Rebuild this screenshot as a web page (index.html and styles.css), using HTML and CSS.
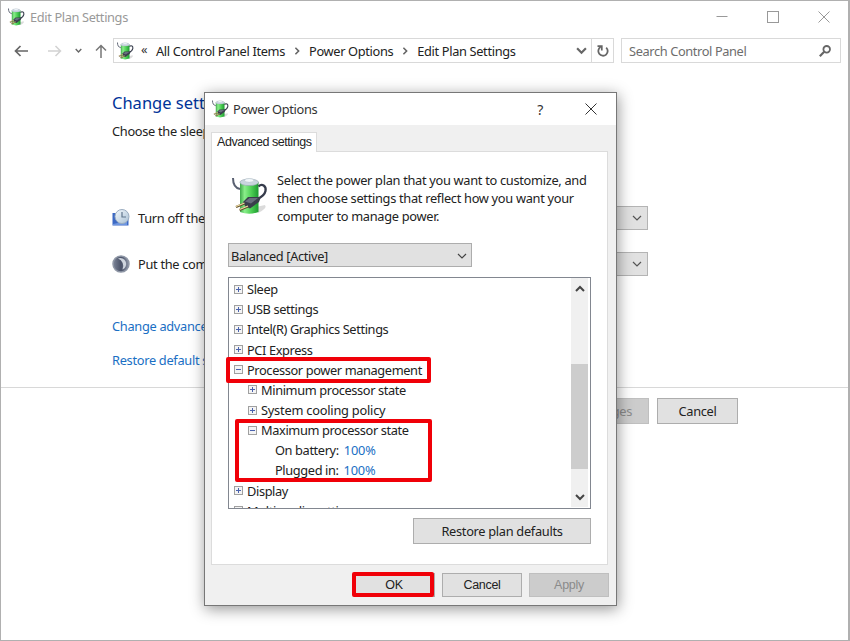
FILE: index.html
```
<!DOCTYPE html>
<html>
    <head>
        <meta charset="utf-8">
        <title>Edit Plan Settings</title>
        <link rel="stylesheet" href="styles.css">
    </head>

    <body>

        <!-- shared icons -->
        <svg class="icon_defs" width="0" height="0">
            <defs>
                <linearGradient id="green_fill" x1="0" x2="1" y1="0" y2="0">
                    <stop offset="0" stop-color="#3fa84a"/>
                    <stop offset="0.25" stop-color="#8aee8a"/>
                    <stop offset="0.6" stop-color="#4fd056"/>
                    <stop offset="1" stop-color="#1c9a30"/>
                </linearGradient>
                <linearGradient id="clock_fill" x1="0" x2="1" y1="0" y2="1">
                    <stop offset="0" stop-color="#f4f9fd"/>
                    <stop offset="1" stop-color="#a9c0d4"/>
                </linearGradient>
                <linearGradient id="moon_fill" x1="0" x2="1" y1="0" y2="0">
                    <stop offset="0" stop-color="#7d8598"/>
                    <stop offset="0.5" stop-color="#4a5268"/>
                    <stop offset="1" stop-color="#8b93a5"/>
                </linearGradient>
                <symbol id="battery" viewBox="0 0 36 38">
                    <path d="M24 30 L33 28 Q36 31 26 36 Z" fill="#000" opacity="0.14"/>
                    <path d="M8 5 V35 Q17 38.500 26.500 35 V5 Z" fill="url(#green_fill)"/>
                    <ellipse cx="17.200" cy="5.300" rx="9.300" ry="3.300" fill="#c9d5de" stroke="#94a3af" stroke-width="0.600"/>
                    <ellipse cx="17.200" cy="3.400" rx="4.500" ry="1.900" fill="#f2f7fa" stroke="#a9b6c1" stroke-width="0.500"/>
                    <path d="M1 1 C1 7 3 11 8 12" fill="none" stroke="#596071" stroke-width="2"/>
                    <path d="M26.500 9.500 C30 6 34.500 9 33.500 14 C32.500 18.500 29 20.500 25 22" fill="none" stroke="#363c4c" stroke-width="2.300"/>
                    <path d="M11 25 L16 20 L29 20 L27 25 L18 31.500 L13 29 Z" fill="#3a3e4c"/>
                    <path d="M13 24.500 L17.500 21 L26 21 L19 26.500 Z" fill="#686e7d"/>
                    <path d="M12.500 26.500 L4 30 M16 29.500 L7.500 33" stroke="#5e4e28" stroke-width="2.400"/>
                    <path d="M12.500 26 L4 29.500 M16 29 L7.500 32.500" stroke="#f0dba4" stroke-width="1.300"/>
                </symbol>
                <symbol id="chevron" viewBox="0 0 10 10">
                    <path d="M1 3 L5 7 L9 3" fill="none" stroke="currentColor" stroke-width="1.200"/>
                </symbol>
                <symbol id="chevron_bold" viewBox="0 0 10 10">
                    <path d="M1 3 L5 7 L9 3" fill="none" stroke="currentColor" stroke-width="2"/>
                </symbol>
                <symbol id="cross" viewBox="0 0 12 12">
                    <path d="M0.500 0.500 L11.500 11.500 M11.500 0.500 L0.500 11.500" fill="none" stroke="currentColor" stroke-width="1"/>
                </symbol>
            </defs>
        </svg>

        <div class="window">

            <div class="titlebar">
                <svg class="app_icon"><use href="#battery"/></svg>
                <span class="title">Edit Plan Settings</span>
                <div class="window_buttons">
                    <svg width="12" height="12" viewBox="0 0 12 12"><path d="M0.500 5.500 H11.500" stroke="currentColor"/></svg>
                    <svg width="12" height="12" viewBox="0 0 12 12"><rect x="0.500" y="0.500" width="11" height="11" fill="none" stroke="currentColor"/></svg>
                    <svg width="12" height="12"><use href="#cross"/></svg>
                </div>
            </div>

            <div class="navbar">
                <div class="nav_arrows">
                    <svg width="14" height="12" viewBox="0 0 14 12"><path d="M14 6 H1.500 M6.500 1 L1.500 6 L6.500 11" fill="none" stroke="#666" stroke-width="1.700"/></svg>
                    <svg class="disabled_arrow" width="14" height="12" viewBox="0 0 14 12"><path d="M0 6 H12.500 M7.500 1 L12.500 6 L7.500 11" fill="none" stroke="#d2d2d2" stroke-width="1.500"/></svg>
                    <svg class="recent_arrow" width="7" height="7"><use href="#chevron_bold"/></svg>
                    <svg class="up_arrow" width="12" height="14" viewBox="0 0 12 14"><path d="M6 14 V1.500 M1 6.500 L6 1.500 L11 6.500" fill="none" stroke="#777" stroke-width="1.500"/></svg>
                </div>
                <div class="address">
                    <svg class="app_icon"><use href="#battery"/></svg>
                    <span class="crumb_more">«</span>
                    <span class="crumb">All Control Panel Items</span>
                    <svg class="crumb_arrow" width="8" height="8"><use href="#chevron_bold"/></svg>
                    <span class="crumb">Power Options</span>
                    <svg class="crumb_arrow" width="8" height="8"><use href="#chevron_bold"/></svg>
                    <span class="crumb">Edit Plan Settings</span>
                    <svg class="address_arrow" width="11" height="11"><use href="#chevron_bold"/></svg>
                </div>
                <div class="refresh">
                    <svg width="12" height="12" viewBox="0 0 12 12"><path d="M9.200 2.600 A4.700 4.700 0 1 1 3.600 2" fill="none" stroke="#666" stroke-width="1.800"/><path d="M0.500 1.200 H4.800 V5.500" fill="none" stroke="#666" stroke-width="1.700"/></svg>
                </div>
                <div class="search">
                    <span>Search Control Panel</span>
                    <svg width="12" height="12" viewBox="0 0 12 12"><circle cx="7.700" cy="4.300" r="3.300" fill="none" stroke="#666" stroke-width="1.800"/><path d="M5.200 6.800 L0.800 11.200" stroke="#666" stroke-width="2.200"/></svg>
                </div>
            </div>

            <div class="content">
                <h1>Change settings for the plan: Balanced</h1>
                <p class="intro">Choose the sleep and display settings that you want</p>

                <div class="setting">
                    <svg width="18" height="18" viewBox="0 0 18 18">
                        <path d="M0.500 4 H7 L16.500 9 V16.500 H0.500 Z" fill="#3c69c4"/>
                        <path d="M1 15 L15 12 V16 H1 Z" fill="#6e96e0"/>
                        <circle cx="10" cy="7.500" r="7" fill="url(#clock_fill)" stroke="#9aacc0"/>
                        <path d="M10 3 V8 H14" fill="none" stroke="#61768e" stroke-width="1.200"/>
                    </svg>
                    <span>Turn off the display:</span>
                    <div class="select"><svg width="10" height="10"><use href="#chevron"/></svg></div>
                </div>

                <div class="setting">
                    <svg width="18" height="18" viewBox="0 0 18 18">
                        <circle cx="9" cy="9" r="8" fill="url(#moon_fill)" stroke="#8f97a6" stroke-width="1.500"/>
                        <path d="M6 3.500 A5.800 5.800 0 1 1 10.500 14.500 A8 8 0 0 0 6 3.500 Z" fill="#cfd5de"/>
                    </svg>
                    <span>Put the computer to sleep:</span>
                    <div class="select"><svg width="10" height="10"><use href="#chevron"/></svg></div>
                </div>

                <a class="link link_advanced">Change advanced power settings</a>
                <a class="link">Restore default settings for this plan</a>
            </div>

            <div class="actions">
                <div class="button disabled save">Save changes</div>
                <div class="button cancel">Cancel</div>
            </div>

        </div>

        <div class="dialog">

            <div class="dialog_title">
                <svg class="app_icon"><use href="#battery"/></svg>
                <span class="title">Power Options</span>
                <span class="help">?</span>
                <svg width="12" height="12"><use href="#cross"/></svg>
            </div>

            <div class="tab">Advanced settings</div>

            <div class="panel">
                <div class="description">
                    <svg width="36" height="38"><use href="#battery"/></svg>
                    <p>Select the power plan that you want to customize, and<br>then choose settings that reflect how you want your<br>computer to manage power.</p>
                </div>

                <div class="plan_select">
                    <span>Balanced [Active]</span>
                    <svg width="10" height="10"><use href="#chevron"/></svg>
                </div>

                <div class="tree_box">
                    <div class="tree">
                        <div class="node"><i class="plus"></i><span>Sleep</span></div>
                        <div class="node"><i class="plus"></i><span>USB settings</span></div>
                        <div class="node"><i class="plus"></i><span>Intel(R) Graphics Settings</span></div>
                        <div class="node"><i class="plus"></i><span>PCI Express</span></div>
                        <div class="node"><i class="minus"></i><span>Processor power management</span></div>
                        <div class="node level2"><i class="plus"></i><span>Minimum processor state</span></div>
                        <div class="node level2"><i class="plus"></i><span class="wide">System cooling policy</span></div>
                        <div class="node level2"><i class="minus"></i><span>Maximum processor state</span></div>
                        <div class="node level3"><span>On battery:</span><span class="value">100%</span></div>
                        <div class="node level3"><span>Plugged in:</span><span class="value">100%</span></div>
                        <div class="node"><i class="plus"></i><span>Display</span></div>
                        <div class="node"><i class="plus"></i><span>Multimedia settings</span></div>
                    </div>
                    <div class="scrollbar">
                        <svg class="scroll_up" width="10" height="10"><use href="#chevron_bold"/></svg>
                        <div class="thumb"></div>
                        <svg width="10" height="10"><use href="#chevron_bold"/></svg>
                    </div>
                </div>

                <div class="button restore">Restore plan defaults</div>
            </div>

            <div class="dialog_buttons">
                <div class="button">OK</div>
                <div class="button">Cancel</div>
                <div class="button disabled">Apply</div>
            </div>

            <!-- red highlights over the dialog -->
            <div class="mark mark_processor"></div>
            <div class="mark mark_maximum"></div>
            <div class="mark mark_ok"></div>
        </div>

    </body>
</html>
```
FILE: styles.css
```
* {
    box-sizing: border-box;
}

body {
    margin: 0;
    width: 850px;
    height: 641px;
    overflow: hidden;
    position: relative;
    background-color: white;
    font-family: "Noto Sans", "Open Sans", sans-serif;
    font-size: 12.8px;
    letter-spacing: -0.3px;
    color: #222;
    white-space: nowrap;
}

h1, p {
    margin: 0;
    font-weight: normal;
}

svg {
    display: block;
    flex: none;
}

.icon_defs {
    position: absolute;
}

.window {
    width: 850px;
    height: 641px;
    border: 1px solid #b0b0b0;
    border-right-width: 2px;
}

.app_icon {
    width: 17px;
    height: 18px;
}

/* title bar */

.titlebar {
    display: flex;
    align-items: center;
    height: 31px;
    padding-left: 7px;
    color: #999;
}

.title {
    letter-spacing: -0.36px;
}

.titlebar .title {
    margin-left: 5px;
}

.window_buttons {
    display: flex;
    gap: 39px;
    margin-left: auto;
    padding-right: 18px;
}

/* navigation row */

.navbar {
    display: flex;
    height: 25px;
    margin-top: 6px;
    padding-left: 13px;
    color: #666;
}

.nav_arrows {
    display: flex;
    align-items: center;
    width: 99px;
}

.disabled_arrow {
    margin-left: 20px;
}

.recent_arrow {
    margin-left: 13px;
}

.up_arrow {
    margin-left: 13px;
}

.address {
    display: flex;
    align-items: center;
    width: 479px;
    border: 1px solid #d9d9d9;
    padding-left: 3px;
}

.crumb_more {
    width: 15px;
    margin-left: 7px;
    margin-top: -3px;
    color: #333;
}

.crumb {
    color: #222;
    letter-spacing: -0.34px;
}

.crumb_arrow {
    margin: 0 8px;
    transform: rotate(-90deg);
}

.address_arrow {
    margin-left: auto;
    margin-right: 4px;
}

.refresh {
    display: flex;
    align-items: center;
    justify-content: center;
    width: 22px;
    border: 1px solid #d9d9d9;
    border-left: none;
}

.search {
    display: flex;
    align-items: center;
    justify-content: space-between;
    width: 220px;
    margin-left: 7px;
    padding: 0 9px 0 7px;
    border: 1px solid #d9d9d9;
    color: #6d6d6d;
    letter-spacing: -0.38px;
}

/* page behind the dialog */

.content {
    height: 325px;
    padding: 28px 0 0 111px;
    border-bottom: 1px solid #d8d8d8;
}

h1 {
    font-size: 16.5px;
    line-height: 24px;
    letter-spacing: 0;
    color: #003399;
}

.intro {
    margin-top: 6px;
    line-height: 20px;
}

.setting {
    display: flex;
    align-items: center;
    width: 536px;
    height: 24px;
    margin-top: 22px;
}

.intro + .setting {
    margin-top: 65px;
}

.setting span {
    margin-left: 8px;
}

.select {
    display: flex;
    align-items: center;
    justify-content: flex-end;
    width: 180px;
    height: 24px;
    margin-left: auto;
    padding-right: 5px;
    border: 1px solid #b4b4b4;
    background-color: #e1e1e1;
    color: #555;
}

.link {
    display: block;
    line-height: 20px;
    margin-top: 14px;
    color: #1a6fc4;
}

.link_advanced {
    margin-top: 40px;
}

.button {
    display: flex;
    align-items: center;
    justify-content: center;
    border: 1px solid #adadad;
    background-color: #e1e1e1;
}

.disabled {
    border-color: #bfbfbf;
    background-color: #cccccc;
    color: #8a8a8a;
}

.actions {
    display: flex;
    justify-content: flex-end;
    gap: 8px;
    margin-top: 10px;
    padding-right: 110px;
}

.actions .button {
    width: 81px;
    height: 26px;
}

.actions .save {
    width: 112px;
}

/* dialog */

.dialog {
    position: absolute;
    left: 204px;
    top: 92px;
    width: 413px;
    height: 514px;
    border: 1px solid #777;
    background-color: #f0f0f0;
    box-shadow: 1px 3px 14px rgba(0, 0, 0, 0.42);
}

.dialog_title {
    display: flex;
    align-items: center;
    height: 32px;
    padding: 0 19px 0 7px;
    background-color: white;
    color: #333;
}

.dialog_title .title {
    margin-left: 4px;
    letter-spacing: -0.34px;
}

.help {
    margin-left: auto;
    margin-right: 42px;
    font-size: 14px;
}

.tab {
    position: relative;
    width: 106px;
    height: 20px;
    margin: 7px 0 -1px 6px;
    padding-left: 5px;
    border: 1px solid #dcdcdc;
    border-bottom: none;
    background-color: white;
    font-family: "Liberation Sans", Arial, sans-serif;
    font-size: 12.5px;
    line-height: 18px;
    letter-spacing: -0.45px;
}

.panel {
    width: 397px;
    height: 414px;
    margin-left: 6px;
    padding: 19px 15px 0 16px;
    border: 1px solid #dcdcdc;
    background-color: white;
}

.description {
    display: flex;
    height: 72px;
    padding-left: 4px;
}

.description svg {
    margin-top: 6px;
}

.description p {
    margin-left: 9px;
    line-height: 18px;
}

.plan_select {
    display: flex;
    align-items: center;
    justify-content: space-between;
    width: 244px;
    height: 24px;
    padding: 1px 4px 0 2px;
    border: 1px solid #adadad;
    background-color: #e1e1e1;
    letter-spacing: -0.35px;
}

.plan_select svg {
    color: #444;
}

.tree_box {
    display: flex;
    width: 363px;
    height: 232px;
    margin-top: 10px;
    border: 1px solid #828790;
    overflow: hidden;
}

.tree {
    flex: 1;
    height: 230px;
    padding: 1px 0 0 5px;
    overflow: hidden;
    letter-spacing: -0.38px;
}

.node {
    display: flex;
    align-items: center;
    height: 20.17px;
}

.level2 {
    padding-left: 14px;
}

.level3 {
    padding-left: 41px;
}

.wide {
    letter-spacing: -0.22px;
}

.node i {
    flex: none;
    width: 9px;
    height: 9px;
    margin-right: 4px;
    border: 1px solid #a0a0a0;
    background-color: #f4f4f4;
    background-image: linear-gradient(#4a62ad, #4a62ad), linear-gradient(#4a62ad, #4a62ad);
    background-repeat: no-repeat;
    background-position: center;
}

.node .plus {
    background-size: 5px 1px, 1px 5px;
}

.node .minus {
    background-size: 5px 1px, 0 0;
}

.value {
    margin-left: 5px;
    letter-spacing: -0.2px;
    color: #1a6fc4;
}

.scrollbar {
    display: flex;
    flex-direction: column;
    align-items: center;
    justify-content: space-between;
    width: 17px;
    height: 229px;
    margin: 0 2px 0 0;
    padding: 6px 0 5px;
    background-color: #f0f0f0;
    color: #444;
}

.scroll_up {
    transform: rotate(180deg);
}

.thumb {
    width: 17px;
    height: 105px;
    margin-top: 47px;
    background-color: #cdcdcd;
}

.restore {
    width: 178px;
    height: 26px;
    margin: 9px 0 0 185px;
}

.dialog_buttons {
    display: flex;
    justify-content: flex-end;
    gap: 7px;
    margin-top: 8px;
    padding-right: 7px;
}

.dialog_buttons .button {
    width: 80px;
    height: 24px;
    font-family: "Liberation Sans", Arial, sans-serif;
    font-size: 12.5px;
}

.dialog_buttons .button:first-child {
    padding-right: 2px;
}

.mark {
    position: absolute;
    border: 4px solid #f00008;
    border-radius: 2px;
}

.mark_processor {
    left: 21px;
    top: 264px;
    width: 205px;
    height: 26px;
}

.mark_maximum {
    left: 30px;
    top: 326px;
    width: 197px;
    height: 63px;
}

.mark_ok {
    left: 147px;
    top: 479px;
    width: 82px;
    height: 25px;
}
```
